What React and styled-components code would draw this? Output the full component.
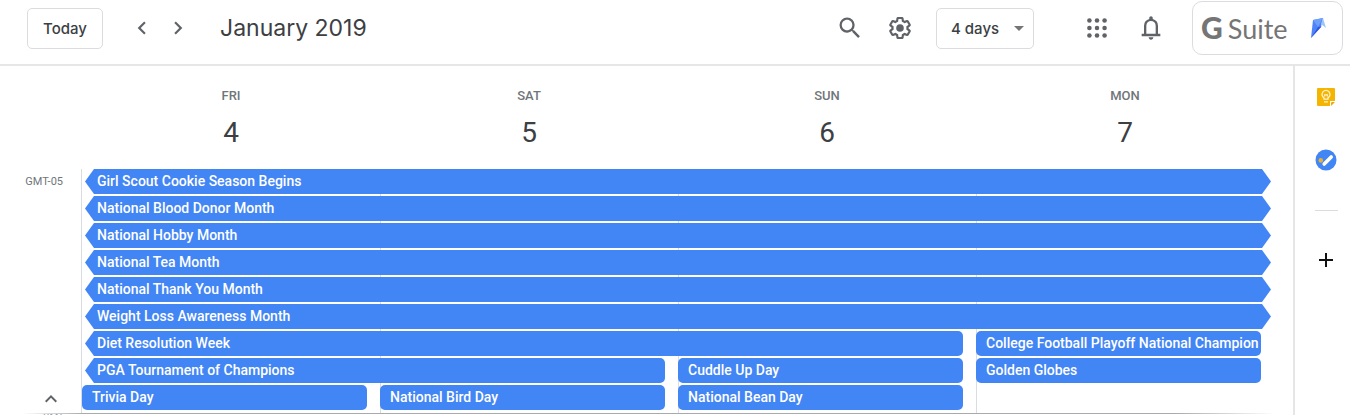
import React from "react";
import styled, { createGlobalStyle } from "styled-components";

const GlobalStyle = createGlobalStyle`
  *, *::before, *::after { box-sizing: border-box; }
  body {
    margin: 0;
    background: #fff;
    color: #3c4043;
    font-family: Roboto, "Liberation Sans", sans-serif;
  }
  button, select { font: inherit; color: inherit; }
  h1, h2, p { margin: 0; padding: 0; }
`;

const Page = styled.div`
  display: flex;
  flex-direction: column;
  height: 100vh;
  overflow: hidden;
`;

/* ---------- top bar ---------- */

const TopBar = styled.header`
  display: flex;
  align-items: center;
  flex: none;
  padding: 1px 7px 9px 27px;
  border-bottom: 2px solid #e6e6e6;
`;

const TodayButton = styled.button`
  width: 76px;
  height: 41px;
  padding: 0;
  border: 1px solid #dadce0;
  border-radius: 5px;
  background: #fff;
  font-family: Inter, sans-serif;
  font-size: 15px;
  font-weight: 500;
`;

const IconButton = styled.button`
  display: flex;
  align-items: center;
  justify-content: center;
  width: ${(p) => p.$size || 36}px;
  height: ${(p) => p.$size || 36}px;
  padding: 0;
  border: 0;
  border-radius: 50%;
  background: none;
  color: ${(p) => p.$color || "#5f6368"};
`;

const Pager = styled.div`
  display: flex;
  margin-left: 21px;
`;

const Title = styled.h1`
  flex: 1;
  margin-left: 24px;
  font-family: Inter, sans-serif;
  font-size: 23px;
  line-height: 32px;
  font-weight: 400;
  white-space: nowrap;
`;

const Tools = styled.div`
  display: flex;
  align-items: center;
  gap: 14px;
`;

const SelectBox = styled.div`
  display: grid;
  align-items: center;
  margin: 0 45px 0 18px;

  > * { grid-area: 1 / 1; }
  > svg { justify-self: end; margin-right: 10px; pointer-events: none; }
`;

const ViewSelect = styled.select`
  width: 98px;
  height: 41px;
  padding: 0 14px;
  border: 1px solid #dadce0;
  border-radius: 5px;
  background: #fff;
  appearance: none;
  font-family: Inter, sans-serif;
  font-size: 15px;
  font-weight: 500;
`;

const AppTools = styled.div`
  display: flex;
  gap: 18px;
  margin-right: 23px;
`;

const SuiteBadge = styled.a`
  display: flex;
  align-items: center;
  justify-content: space-between;
  width: 151px;
  height: 54px;
  padding: 0 15px 0 8px;
  border: 1px solid #dadce0;
  border-radius: 10px;
  color: #757575;
  text-decoration: none;
`;

const SuiteName = styled.span`
  display: flex;
  align-items: baseline;
  gap: 5px;
  font-family: Lato, sans-serif;
  font-size: 27px;
  line-height: 32px;

  b { font-size: 30px; font-weight: 900; }
`;

/* ---------- calendar ---------- */

const Body = styled.div`
  display: flex;
  flex: 1;
  min-height: 0;
`;

const Calendar = styled.main`
  display: flex;
  flex-direction: column;
  flex: 1;
  min-width: 0;
  padding-right: 19px;
`;

const DayHeader = styled.div`
  display: grid;
  grid-template-columns: repeat(4, 1fr);
  padding: 22px 0 20px 82px;
  text-align: center;
`;

const DayName = styled.p`
  font-size: 13px;
  line-height: 16px;
  font-weight: 500;
  color: #70757a;
`;

const DayNumber = styled.h2`
  margin-top: 13px;
  font-size: 28px;
  line-height: 32px;
  font-weight: 400;
`;

const AllDay = styled.section`
  display: flex;
  flex: none;
  height: 244px;
`;

const Gutter = styled.div`
  display: flex;
  flex-direction: column;
  align-items: flex-end;
  justify-content: space-between;
  flex: none;
  width: 82px;
  padding: 5px 18px 2px 0;
  border-right: 1px solid #dadce0;
`;

const Zone = styled.span`
  font-size: 11px;
  line-height: 16px;
  color: #70757a;
`;

const EventGrid = styled.div`
  flex: 1;
  display: grid;
  grid-template-columns: repeat(4, 1fr);
  grid-template-rows: repeat(9, 25px) 1fr;
  row-gap: 2px;
`;

const DayLine = styled.div`
  grid-column: ${(p) => p.$col};
  grid-row: 1 / -1;
  border-left: 1px solid #dadce0;
`;

const EventBar = styled.button`
  grid-row: ${(p) => p.$row};
  grid-column: ${(p) => p.$from} / span ${(p) => p.$span};
  margin: 0 ${(p) => (p.$after ? 3 : 13)}px 0 ${(p) => (p.$before ? 3 : 0)}px;
  padding: 0 0 0 ${(p) => (p.$before ? 12 : 10)}px;
  border: 0;
  border-radius: ${(p) => (p.$before ? "0 5px 5px 0" : "5px")};
  background: #4285f4;
  color: #fff;
  font-size: 14px;
  line-height: 25px;
  font-weight: 500;
  text-align: left;
  white-space: nowrap;
  overflow: hidden;
  clip-path: ${(p) =>
    p.$before && p.$after
      ? "polygon(0 50%, 9px 0, calc(100% - 9px) 0, 100% 50%, calc(100% - 9px) 100%, 9px 100%)"
      : p.$before
      ? "polygon(0 50%, 9px 0, 100% 0, 100% 100%, 9px 100%)"
      : "none"};
`;

const Hours = styled.section`
  flex: 1;
  min-height: 0;
  overflow: hidden;
  margin-left: 24px;
  border-top: 1px solid;
  border-image: linear-gradient(90deg, transparent, #a8aaad 60px, #a8aaad calc(100% - 100px), transparent) 1;
`;

const HourLabel = styled.p`
  width: 40px;
  font-size: 10px;
  line-height: 8px;
  color: #9aa0a6;
  text-align: right;
`;

/* ---------- side panel ---------- */

const SidePanel = styled.aside`
  display: flex;
  flex-direction: column;
  align-items: center;
  flex: none;
  width: 57px;
  padding: 17px 0 0 7px;
  border-left: 2px solid #e6e6e6;
`;

const PanelApps = styled.div`
  display: flex;
  flex-direction: column;
  gap: 36px;
`;

const Divider = styled.hr`
  width: 23px;
  height: 1px;
  margin: 37px 0 35px;
  border: 0;
  background: #dadce0;
`;

/* ---------- icons ---------- */

const Icon = ({ size = 26, d, children }) => (
  <svg width={size} height={size} viewBox="0 0 24 24" fill="currentColor" aria-hidden="true">
    {d && <path d={d} />}
    {children}
  </svg>
);

const PATHS = {
  left: "M15.41 7.41 14 6l-6 6 6 6 1.41-1.41L10.83 12z",
  right: "M10 6 8.59 7.41 13.17 12l-4.58 4.59L10 18l6-6z",
  up: "m12 8-6 6 1.41 1.41L12 10.83l4.59 4.58L18 14z",
  search:
    "M15.5 14h-.79l-.28-.27A6.47 6.47 0 0 0 16 9.5 6.5 6.5 0 1 0 9.5 16c1.61 0 3.09-.59 4.23-1.57l.27.28v.79l5 4.99L20.49 19zm-6 0C7.01 14 5 11.99 5 9.5S7.01 5 9.5 5 14 7.01 14 9.5 11.99 14 9.5 14z",
  gear:
    "M13.85 22.25h-3.7c-.74 0-1.36-.54-1.45-1.27l-.27-1.89c-.27-.14-.53-.29-.79-.46l-1.8.72c-.7.26-1.47-.03-1.81-.65L2.2 15.53c-.35-.66-.2-1.44.36-1.88l1.53-1.19c-.01-.15-.02-.3-.02-.46 0-.15.01-.31.02-.46l-1.52-1.19c-.59-.45-.74-1.26-.37-1.88l1.85-3.19c.34-.62 1.11-.9 1.79-.63l1.81.73c.26-.17.52-.32.78-.46l.27-1.91c.09-.7.71-1.25 1.44-1.25h3.7c.74 0 1.36.54 1.45 1.27l.27 1.89c.27.14.53.29.79.46l1.8-.72c.71-.26 1.48.03 1.82.65l1.84 3.18c.36.66.2 1.44-.36 1.88l-1.52 1.19c.01.15.02.3.02.46s-.01.31-.02.46l1.52 1.19c.56.45.72 1.23.37 1.86l-1.86 3.22c-.34.62-1.11.9-1.8.63l-1.8-.72c-.26.17-.52.32-.78.46l-.27 1.91c-.1.68-.72 1.22-1.46 1.22zm-3.23-2h2.76l.37-2.55.53-.22c.44-.18.88-.44 1.34-.78l.45-.34 2.38.96 1.38-2.4-2.03-1.58.07-.56c.03-.26.06-.51.06-.78s-.03-.53-.06-.78l-.07-.56 2.03-1.58-1.39-2.4-2.39.96-.45-.35c-.42-.32-.87-.58-1.33-.77l-.52-.22-.37-2.55h-2.76l-.37 2.55-.53.21c-.44.19-.88.44-1.34.79l-.45.33-2.38-.95-1.39 2.39 2.03 1.58-.07.56a7 7 0 0 0-.06.79c0 .26.02.53.06.78l.07.56-2.03 1.58 1.38 2.4 2.39-.96.45.35c.43.33.86.58 1.33.77l.53.22z",
  bell:
    "M4 19v-2h2v-7q0-2.075 1.25-3.688Q8.5 4.7 10.5 4.2v-.7q0-.625.438-1.062Q11.375 2 12 2t1.063.438Q13.5 2.875 13.5 3.5v.7q2 .5 3.25 2.112Q18 7.925 18 10v7h2v2Zm8 3q-.825 0-1.412-.587Q10 20.825 10 20h4q0 .825-.587 1.413Q12.825 22 12 22Zm-4-5h8v-7q0-1.65-1.175-2.825Q13.65 6 12 6q-1.65 0-2.825 1.175Q8 8.35 8 10Z",
  plus: "M19 13h-6v6h-2v-6H5v-2h6V5h2v6h6z",
};

const AppsIcon = () => (
  <Icon>
    {[5, 12, 19].flatMap((y) => [5, 12, 19].map((x) => <circle key={`${x}-${y}`} cx={x} cy={y} r="2.1" />))}
  </Icon>
);

const KiteIcon = () => (
  <svg width="18" height="24" viewBox="0 0 18 24" aria-hidden="true">
    <path d="M4 4 14 2 12 11 2 22z" fill="#4f83f8" />
    <path d="M4 4 14 2 9 11z" fill="#6ea0fb" />
    <path d="M9 11 12.500 10.500 2 22z" fill="#2c55e0" />
    <path d="M14 2 17 12 12 8z" fill="#9cc6fb" />
  </svg>
);

const KeepIcon = () => (
  <svg width="20" height="20" viewBox="0 0 20 20" aria-hidden="true">
    <path d="M2 1h16a1 1 0 0 1 1 1v12h-5v5H2a1 1 0 0 1-1-1V2a1 1 0 0 1 1-1z" fill="#f4b400" />
    <path d="M15 19v-3a1 1 0 0 1 1-1h3z" fill="#f2a60c" />
    <path d="M8 12.200v-1.300a4 4 0 1 1 4 0v1.300z" fill="none" stroke="#fff3cf" strokeWidth="1.300" />
    <path d="M8.700 9.500V7.800h2.600v1.700M8 14.800h4" fill="none" stroke="#fff3cf" strokeWidth="1.200" />
  </svg>
);

const TasksIcon = () => (
  <svg width="22" height="22" viewBox="0 0 22 22" aria-hidden="true">
    <circle cx="11" cy="11" r="10.500" fill="#4285f4" />
    <path d="m9.200 15 7-7" stroke="#fff" strokeWidth="3.600" strokeLinecap="round" />
    <circle cx="5.800" cy="11.400" r="2.300" fill="#e5b13c" />
  </svg>
);

/* ---------- data ---------- */

const DAYS = [
  ["FRI", 4],
  ["SAT", 5],
  ["SUN", 6],
  ["MON", 7],
];

const EVENTS = [
  { title: "Girl Scout Cookie Season Begins", row: 1, from: 1, span: 4, before: true, after: true },
  { title: "National Blood Donor Month", row: 2, from: 1, span: 4, before: true, after: true },
  { title: "National Hobby Month", row: 3, from: 1, span: 4, before: true, after: true },
  { title: "National Tea Month", row: 4, from: 1, span: 4, before: true, after: true },
  { title: "National Thank You Month", row: 5, from: 1, span: 4, before: true, after: true },
  { title: "Weight Loss Awareness Month", row: 6, from: 1, span: 4, before: true, after: true },
  { title: "Diet Resolution Week", row: 7, from: 1, span: 3, before: true },
  { title: "College Football Playoff National Champion", row: 7, from: 4, span: 1 },
  { title: "PGA Tournament of Champions", row: 8, from: 1, span: 2, before: true },
  { title: "Cuddle Up Day", row: 8, from: 3, span: 1 },
  { title: "Golden Globes", row: 8, from: 4, span: 1 },
  { title: "Trivia Day", row: 9, from: 1, span: 1 },
  { title: "National Bird Day", row: 9, from: 2, span: 1 },
  { title: "National Bean Day", row: 9, from: 3, span: 1 },
];

export default function App() {
  return (
    <Page>
      <GlobalStyle />
      <TopBar>
        <TodayButton type="button">Today</TodayButton>
        <Pager>
          <IconButton type="button" aria-label="Previous period"><Icon d={PATHS.left} /></IconButton>
          <IconButton type="button" aria-label="Next period"><Icon d={PATHS.right} /></IconButton>
        </Pager>
        <Title>January 2019</Title>
        <Tools>
          <IconButton type="button" aria-label="Search"><Icon size={28} d={PATHS.search} /></IconButton>
          <IconButton type="button" aria-label="Settings">
            <Icon d={PATHS.gear}><circle cx="12" cy="12" r="3.5" /></Icon>
          </IconButton>
        </Tools>
        <SelectBox>
          <ViewSelect aria-label="View" defaultValue="4 days">
            <option>4 days</option>
          </ViewSelect>
          <svg width="10" height="5" viewBox="0 0 10 5" aria-hidden="true">
            <path d="M0 0h10L5 5z" fill="#757575" />
          </svg>
        </SelectBox>
        <AppTools>
          <IconButton type="button" aria-label="Apps"><AppsIcon /></IconButton>
          <IconButton type="button" aria-label="Notifications"><Icon size={28} d={PATHS.bell} /></IconButton>
        </AppTools>
        <SuiteBadge href="#suite">
          <SuiteName><b>G</b> Suite</SuiteName>
          <KiteIcon />
        </SuiteBadge>
      </TopBar>
      <Body>
        <Calendar>
          <DayHeader>
            {DAYS.map(([name, number]) => (
              <div key={name}>
                <DayName>{name}</DayName>
                <DayNumber>{number}</DayNumber>
              </div>
            ))}
          </DayHeader>
          <AllDay>
            <Gutter>
              <Zone>GMT-05</Zone>
              <IconButton type="button" $size={24} aria-label="Collapse all-day events">
                <Icon size={24} d={PATHS.up} />
              </IconButton>
            </Gutter>
            <EventGrid>
              {[2, 3, 4].map((col) => <DayLine key={col} $col={col} />)}
              {EVENTS.map((e) => (
                <EventBar
                  key={e.title}
                  type="button"
                  $row={e.row}
                  $from={e.from}
                  $span={e.span}
                  $before={e.before}
                  $after={e.after}
                >
                  {e.title}
                </EventBar>
              ))}
            </EventGrid>
          </AllDay>
          <Hours>
            <HourLabel>GMT</HourLabel>
          </Hours>
        </Calendar>
        <SidePanel>
          <PanelApps>
            <IconButton type="button" $size={27} aria-label="Keep"><KeepIcon /></IconButton>
            <IconButton type="button" $size={27} aria-label="Tasks"><TasksIcon /></IconButton>
          </PanelApps>
          <Divider />
          <IconButton type="button" $size={28} $color="#111" aria-label="Get add-ons"><Icon size={24} d={PATHS.plus} /></IconButton>
        </SidePanel>
      </Body>
    </Page>
  );
}
